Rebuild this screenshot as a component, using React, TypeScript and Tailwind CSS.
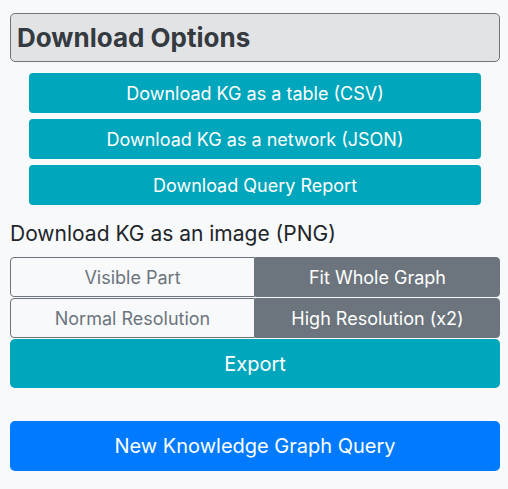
export default function App() {
  return (
    <div
      className="min-h-screen w-[508px] bg-[#f8f9fa] pl-[10px] pr-[8px] pt-[13px] text-[#212529]"
      style={{ fontFamily: 'Inter, "Liberation Sans", Arial, sans-serif' }}
    >
      {/* Header */}
      <div className="flex h-[49px] items-center rounded-[5px] border border-[#6c757d] bg-[#e2e3e5] pl-[6px]">
        <h2 className="text-[26px] font-bold text-[#343a40]">Download Options</h2>
      </div>

      {/* Download buttons */}
      <div className="mt-[11px] flex flex-col gap-[6px] px-[19px]">
        <button className="h-[40px] rounded-[4px] bg-[#00a6bb] text-[18px] text-white">
          Download KG as a table (CSV)
        </button>
        <button className="h-[40px] rounded-[4px] bg-[#00a6bb] text-[18px] text-white">
          Download KG as a network (JSON)
        </button>
        <button className="h-[40px] rounded-[4px] bg-[#00a6bb] text-[18px] text-white">
          Download Query Report
        </button>
      </div>

      {/* Image export */}
      <p className="mt-[15px] text-[21px] leading-[28px]">Download KG as an image (PNG)</p>

      <div className="mt-[9px] flex h-[40px] text-[18px]">
        <button className="flex-1 rounded-l-[4px] border border-[#6c757d] text-[#6c757d]">
          Visible Part
        </button>
        <button className="flex-1 rounded-r-[4px] border border-[#6c757d] bg-[#6c757d] text-white">
          Fit Whole Graph
        </button>
      </div>
      <div className="mt-[1px] flex h-[40px] text-[18px]">
        <button className="flex-1 rounded-l-[4px] border border-[#6c757d] text-[#6c757d]">
          Normal Resolution
        </button>
        <button className="flex-1 rounded-r-[4px] border border-[#6c757d] bg-[#6c757d] text-white">
          High Resolution (x2)
        </button>
      </div>
      <button className="mt-[1px] h-[49px] w-full rounded-[5px] bg-[#00a6bb] text-[20px] text-white">
        Export
      </button>

      <button className="mt-[33px] h-[50px] w-full rounded-[5px] bg-[#007bff] text-[20px] text-white">
        New Knowledge Graph Query
      </button>
    </div>
  );
}
